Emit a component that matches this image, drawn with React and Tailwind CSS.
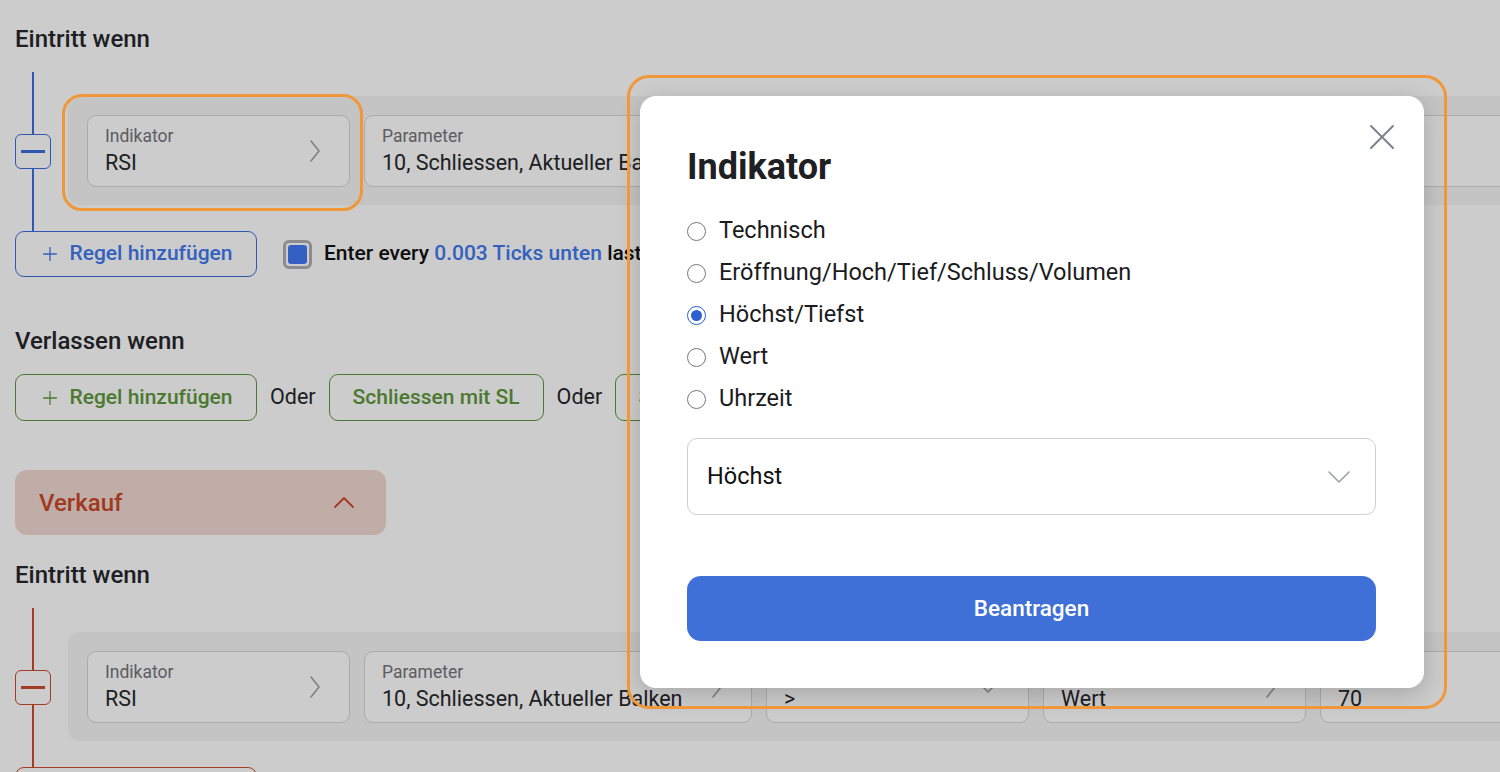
import { Plus } from "lucide-react";

const fields = [
  { label: "Indikator", value: "RSI", icon: "right", width: "w-[263px]" },
  { label: "Parameter", value: "10, Schliessen, Aktueller Balken", icon: "right", width: "w-[388px]" },
  { label: "Bedingung", value: ">", icon: "down", width: "w-[263px]" },
  { label: "Vergleich", value: "Wert", icon: "right", width: "w-[263px]" },
  { label: "Wert", value: "70", icon: null, width: "w-[263px]" },
];

const options = ["Technisch", "Eröffnung/Hoch/Tief/Schluss/Volumen", "Höchst/Tiefst", "Wert", "Uhrzeit"];

function ChevronRightThin() {
  return (
    <svg width="12" height="24" viewBox="0 0 12 24" fill="none">
      <path d="M2 2 L10 12 L2 22" stroke="#a1a1a6" strokeWidth="1.6" strokeLinecap="round" strokeLinejoin="round" />
    </svg>
  );
}

function ChevronDownThin({ color = "#a1a1a6" }) {
  return (
    <svg width="24" height="14" viewBox="0 0 24 14" fill="none">
      <path d="M2 2 L12 12 L22 2" stroke={color} strokeWidth="1.6" strokeLinecap="round" strokeLinejoin="round" />
    </svg>
  );
}

function Field({ field }) {
  return (
    <div
      className={`${field.width} shrink-0 h-[72px] bg-white border border-[#d6d6d8] rounded-[9px] pl-[17px] pr-[28px] flex items-center justify-between`}
    >
      <div>
        <p className="text-[17.5px] leading-[20px] text-[#74757b]">{field.label}</p>
        <p className="text-[21.5px] leading-[26px] mt-[4px] text-[#26272b] whitespace-nowrap">{field.value}</p>
      </div>
      {field.icon === "right" && <ChevronRightThin />}
      {field.icon === "down" && <ChevronDownThin />}
    </div>
  );
}

function RuleSection({ color, buttonClass }) {
  return (
    <div>
      <div className="flex mt-[18px]">
        {/* connector */}
        <div className="w-[36px] h-[159px] flex flex-col items-center shrink-0">
          <div className={`flex-1 w-[2px] ${color.line}`} />
          <div className={`w-[36px] h-[35px] rounded-[6px] border ${color.border} bg-white flex items-center justify-center`}>
            <div className={`w-[24px] h-[3px] ${color.line}`} />
          </div>
          <div className={`flex-1 w-[2px] ${color.line}`} />
        </div>
        <div className="ml-[17px] mt-[24px] h-[109px] flex-1 bg-[#f5f5f5] rounded-l-[12px] pl-[19px] pt-[19px] flex gap-[14px] overflow-hidden">
          {fields.map((f) => (
            <Field key={f.label} field={f} />
          ))}
        </div>
      </div>
      <div className="flex items-center">
        <button className={`w-[242px] h-[46px] rounded-[9px] border ${buttonClass} flex items-center justify-center gap-[8px] text-[21px] font-medium`}>
          <Plus size={22} strokeWidth={1.4} />
          Regel hinzufügen
        </button>
        <div className="ml-[26px] w-[29px] h-[29px] rounded-[6px] border-[3px] border-[#afafb2] flex items-center justify-center">
          <div className="w-[19px] h-[19px] rounded-[3px] bg-[#4179f5]" />
        </div>
        <p className="ml-[12px] text-[21px] font-medium text-[#111] whitespace-nowrap">
          Enter every <span className="text-[#4179f0]">0.003 Ticks unten</span> last price
        </p>
      </div>
    </div>
  );
}

export default function App() {
  return (
    <div className="relative w-[1500px] h-[772px] overflow-hidden bg-white font-['Roboto',sans-serif]">
      <div className="pl-[15px] pt-[24px]">
        <h2 className="text-[24px] leading-[30px] font-medium text-[#26272b]">Eintritt wenn</h2>
        <RuleSection
          color={{ line: "bg-[#3d6fdf]", border: "border-[#3d6fdf]" }}
          buttonClass="border-[#3d6fdf] text-[#4179f0]"
        />

        <h2 className="mt-[49px] text-[24px] leading-[30px] font-medium text-[#26272b]">Verlassen wenn</h2>
        <div className="mt-[18px] flex items-center gap-[13px]">
          <button className="w-[242px] h-[47px] rounded-[9px] border border-[#5e983e] text-[#5e983e] flex items-center justify-center gap-[8px] text-[21px] font-medium">
            <Plus size={22} strokeWidth={1.4} />
            Regel hinzufügen
          </button>
          <span className="text-[21.5px] text-[#26272b]">Oder</span>
          <button className="w-[215px] h-[47px] rounded-[9px] border border-[#5e983e] text-[#5e983e] text-[21px] font-medium">
            Schliessen mit SL
          </button>
          <span className="text-[21.5px] text-[#26272b]">Oder</span>
          <button className="w-[215px] h-[47px] rounded-[9px] border border-[#5e983e] text-[#5e983e] text-[21px] font-medium">
            Schliessen mit TP
          </button>
        </div>

        <div className="mt-[49px] w-[371px] h-[65px] rounded-[12px] bg-[#f2d9d3] pl-[24px] pr-[31px] flex items-center justify-between">
          <span className="text-[24px] font-medium text-[#ca482a]">Verkauf</span>
          <svg width="22" height="13" viewBox="0 0 22 13" fill="none">
            <path d="M2 11 L11 2 L20 11" stroke="#ca482a" strokeWidth="1.8" strokeLinecap="round" strokeLinejoin="round" />
          </svg>
        </div>

        <h2 className="mt-[25px] text-[24px] leading-[30px] font-medium text-[#26272b]">Eintritt wenn</h2>
        <RuleSection
          color={{ line: "bg-[#cc4b2b]", border: "border-[#cc4b2b]" }}
          buttonClass="border-[#cc4b2b] text-[#cc4b2b]"
        />
      </div>

      {/* backdrop */}
      <div className="absolute inset-0 bg-black/20" />

      {/* highlight on first indicator field */}
      <div className="absolute left-[62px] top-[94px] w-[301px] h-[117px] rounded-[20px] border-[3px] border-[#f0973a]" />

      {/* modal */}
      <div className="absolute left-[640px] top-[96px] w-[784px] h-[592px] bg-white rounded-[16px] shadow-[0_6px_24px_rgba(0,0,0,0.18)] pl-[47px] pr-[48px] pt-[147px]">
        <button className="absolute right-[29px] top-[28px]">
          <svg width="26" height="26" viewBox="0 0 26 26" fill="none">
            <path d="M2 2 L24 24 M24 2 L2 24" stroke="#7e828a" strokeWidth="2" strokeLinecap="round" />
          </svg>
        </button>
        <h1 className="absolute left-[47px] top-[50px] text-[36px] leading-[42px] font-bold text-[#1f2024]">Indikator</h1>
        <div className="-mt-[33px]">
          {options.map((o, i) => (
            <div key={o} className="h-[42px] flex items-center gap-[13px]">
              {i === 2 ? (
                <div className="w-[19px] h-[19px] rounded-full border-[1.5px] border-[#2d5fd0] flex items-center justify-center">
                  <div className="w-[11px] h-[11px] rounded-full bg-[#2d5fd0]" />
                </div>
              ) : (
                <div className="w-[19px] h-[19px] rounded-full border-[1.5px] border-[#77787c]" />
              )}
              <span className="text-[23.5px] text-[#1b1b1d]">{o}</span>
            </div>
          ))}
        </div>
        <div className="mt-[18px] h-[77px] rounded-[10px] border border-[#cfcfd6] pl-[19px] pr-[24px] flex items-center justify-between">
          <span className="text-[23.5px] text-[#111]">Höchst</span>
          <ChevronDownThin color="#9ea2a8" />
        </div>
        <button className="mt-[61px] w-full h-[65px] rounded-[14px] bg-[#3f70d8] text-white text-[22.5px] font-medium">
          Beantragen
        </button>
      </div>

      {/* highlight around modal */}
      <div className="absolute left-[627px] top-[75px] w-[820px] h-[634px] rounded-[22px] border-[3px] border-[#f0973a]" />
    </div>
  );
}
